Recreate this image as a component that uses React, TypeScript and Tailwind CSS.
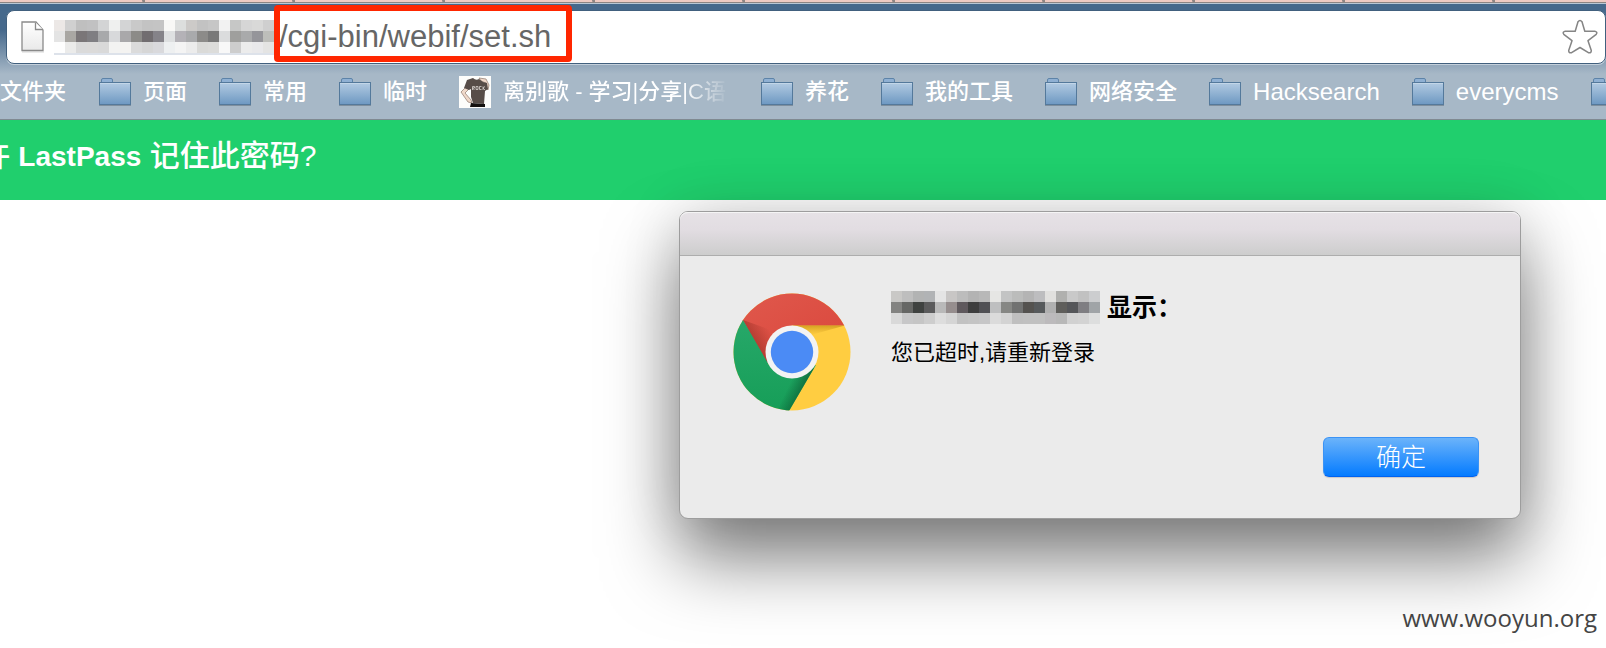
import type { ReactNode } from "react";

const urlMosaic = [
  ["#ece8e6", "#d0d0d0", "#bfbfbf", "#c1c1c2", "#d3d4d5", "#eff0ef", "#d3d4d5", "#c9c9c9", "#c3c3c3", "#c4c4c4", "#f8f8f6", "#dcdedd", "#cccac8", "#c2c2c2", "#c6c6c6", "#f2f2f2", "#c6c7c6", "#d6d6d6", "#d9d9d8", "#cfcfcf"],
  ["#e4e4e4", "#a9a7a3", "#7a7678", "#7f7e82", "#a8a9ab", "#d8d9db", "#a9a8aa", "#8c8b88", "#716d70", "#858389", "#dee0e1", "#b4b2b7", "#a9aaac", "#8c8b89", "#797979", "#dbdcdd", "#9f9f9d", "#a9aaab", "#95959a", "#bdbeba"],
  ["#fefefe", "#ebebea", "#dadada", "#dbdad9", "#d9d9d9", "#f3f3f2", "#f4f3f1", "#dbdbdb", "#d6d6d6", "#d9d9dc", "#eef0f1", "#f4f4f4", "#ececec", "#dadad8", "#dcdcda", "#f8f8f8", "#cdcdcd", "#ececec", "#e9e9eb", "#e4e4e3"],
];

const hostMosaic = [
  ["#c9c8c6", "#bebebe", "#b2b3b3", "#b1b3b5", "#e4e4e4", "#c8c6c5", "#bcbcbc", "#b3b3b3", "#b8b8b8", "#e6e6e4", "#c3c4c4", "#bbbcbb", "#b4b4b4", "#bdbdbf", "#e1e0de", "#b0b0ae", "#c9c9c9", "#c1c1c1", "#cccdcf"],
  ["#838381", "#666765", "#3f4240", "#5b5b5c", "#b9b9b9", "#968e8e", "#5f595d", "#3e3e3e", "#505054", "#bebfc0", "#868784", "#717271", "#54524f", "#56595b", "#b0b0b0", "#5f5e5b", "#555659", "#7f7e82", "#a0a4a7"],
  ["#d9d9d9", "#c7c7c8", "#c5c5c5", "#cdcdcd", "#dddddd", "#d5d5d5", "#c2c2c2", "#c4c4c4", "#c6c6c7", "#dbdbdb", "#d3d3d3", "#bfbfbf", "#c0c0c0", "#c0c0c0", "#bcbabc", "#b8b8b8", "#d1d1d1", "#d3d3d3", "#dddede"],
];

function Mosaic({ rows }: { rows: string[][] }) {
  return (
    <div aria-hidden="true" className="flex shrink-0 flex-col">
      {rows.map((row, r) => (
        <div key={r} className="flex">
          {row.map((color, c) => (
            <span key={c} className="size-[11px]" style={{ backgroundColor: color }} />
          ))}
        </div>
      ))}
    </div>
  );
}

function FolderIcon() {
  return (
    <svg width="32" height="28" viewBox="0 0 32 28" className="shrink-0" aria-hidden="true">
      <defs>
        <linearGradient id="folder" x1="0" y1="0" x2="0" y2="1">
          <stop offset="0" stopColor="#b3cbe2" />
          <stop offset="1" stopColor="#6d98c2" />
        </linearGradient>
      </defs>
      <path d="M2.500 5V2Q2.500.5 4 .5H12Q13.500.5 13.500 2V5" fill="#8fb0d3" stroke="#5d83a8" />
      <rect x=".5" y="4.500" width="31" height="22" fill="url(#folder)" stroke="#54799b" />
      <path d="M1 5.500H31" stroke="#c3d6e8" />
      <path d="M0 27.500H32" stroke="#7f8f9e" />
    </svg>
  );
}

function ShirtIcon() {
  return (
    <svg width="32" height="32" viewBox="0 0 32 32" className="shrink-0" aria-hidden="true">
      <rect width="32" height="32" fill="#fdfdfb" />
      <path d="M7 11L2 16L9 26L13 27L12 24L6 17L10 13Z" fill="#f0d9ca" stroke="#8d776b" strokeWidth=".7" />
      <path d="M20 2L27 3L30 9L29 14L26 11L27 7L22 5Z" fill="#f0d9ca" stroke="#8d776b" strokeWidth=".7" />
      <path d="M14 2L8 4L5 12L10 14L12 13L12 21L14 27L25 28L26 15L29 13L28 7L24 6L20 3Q17 5 14 2Z" fill="#574d48" />
      <path d="M12 27L26 28L26 31H11Z" fill="#14110f" />
      <path d="M13.500 14V10.500H15.500V12H13.500L15.500 14M17 10.500H19V13.500H17ZM22.500 10.500H20.500V13.500H22.500M24 10.500V14M26 10.500L24 12L26 14" fill="none" stroke="#d8d3cf" strokeWidth=".8" />
    </svg>
  );
}

function PageIcon() {
  return (
    <svg width="24" height="32" viewBox="0 0 24 32" className="shrink-0" aria-hidden="true">
      <defs>
        <linearGradient id="sheet" x1="0" y1="0" x2="0" y2="1">
          <stop offset="0" stopColor="#ffffff" />
          <stop offset="1" stopColor="#e9e9e9" />
        </linearGradient>
      </defs>
      <path d="M1 31H23" stroke="#d5d5d5" />
      <path d="M1 1H15L22 9V29.500H1Z" fill="url(#sheet)" stroke="#8a8a8a" strokeWidth="1.300" />
      <path d="M14.500 1.500V8.500H22" fill="#fff" stroke="#8a8a8a" strokeWidth="1.300" />
    </svg>
  );
}

function StarIcon() {
  return (
    <svg width="36" height="36" viewBox="0 0 36 36" className="shrink-0" aria-hidden="true">
      <path
        d="M16 2.800Q18 .2 20 2.800L22.800 12.200H32.800Q36 13 34.200 15.300L26 21.700L29.300 31.600Q29.200 34.400 26.400 33.700L18 28.500L9.600 33.700Q6.800 34.400 6.700 31.600L10 21.700L1.800 15.300Q0 13 3.200 12.200H13.200Z"
        fill="#fff"
        stroke="#858585"
        strokeWidth="1.500"
        strokeLinejoin="round"
      />
    </svg>
  );
}

function ChromeLogo() {
  return (
    <svg viewBox="0 0 118 118" className="size-[118px] shrink-0" role="img" aria-label="Chrome">
      <defs>
        <clipPath id="disc">
          <circle cx="59" cy="59" r="58.500" />
        </clipPath>
        <linearGradient id="red" x1="0" y1="0" x2="1" y2="1">
          <stop offset="0" stopColor="#e0594d" />
          <stop offset="1" stopColor="#d9453a" />
        </linearGradient>
        <linearGradient id="green" x1="0" y1="0" x2="0" y2="1">
          <stop offset="0" stopColor="#27a869" />
          <stop offset="1" stopColor="#169e58" />
        </linearGradient>
        <linearGradient id="redShade" gradientUnits="userSpaceOnUse" x1="20" y1="50" x2="38" y2="40">
          <stop offset="0" stopColor="#8e2a20" stopOpacity=".55" />
          <stop offset="1" stopColor="#8e2a20" stopOpacity="0" />
        </linearGradient>
        <linearGradient id="yellowShade" gradientUnits="userSpaceOnUse" x1="80" y1="32" x2="80" y2="43">
          <stop offset="0" stopColor="#b8860b" stopOpacity=".65" />
          <stop offset="1" stopColor="#e0a92c" stopOpacity="0" />
        </linearGradient>
        <linearGradient id="greenShade" gradientUnits="userSpaceOnUse" x1="71" y1="97" x2="57" y2="90">
          <stop offset="0" stopColor="#0b5c33" stopOpacity=".75" />
          <stop offset="1" stopColor="#0b5c33" stopOpacity="0" />
        </linearGradient>
      </defs>
      <g clipPath="url(#disc)">
        <rect width="118" height="118" fill="#ffcd41" />
        <path d="M0 0H118V32.500H59L34 72L8 26Z" fill="url(#red)" />
        <path d="M10 27L34 72L52 42Z" fill="url(#redShade)" />
        <path d="M59 32.500H112L78 42Z" fill="url(#yellowShade)" />
        <path d="M10 27L0 27V118H56L83 72L59 80L36 72Z" fill="url(#green)" />
        <path d="M81 75L56 118H44L60 82Z" fill="url(#greenShade)" />
      </g>
      <circle cx="59" cy="59" r="26.500" fill="#f3f3f3" />
      <circle cx="59" cy="59" r="21.200" fill="#4b8bf5" />
    </svg>
  );
}

function Bookmark({ label, latin, icon }: { label?: string; latin?: boolean; icon?: ReactNode }) {
  return (
    <a href="#" className="flex shrink-0 items-center gap-3">
      {icon ?? <FolderIcon />}
      {label && <span className={latin ? "h-8 text-[24px] leading-8" : "h-8 leading-8"}>{label}</span>}
    </a>
  );
}

export default function App() {
  return (
    <div className="flex min-h-screen flex-col overflow-hidden bg-white font-['Liberation_Sans','Noto_Sans_CJK_SC',sans-serif]">
      <header className="border-b border-[#808991] bg-[linear-gradient(#46698c_0px,#46698c_30px,#a7b8c7_74px)]">
        <div className="flex h-[4px] justify-start gap-[147px] overflow-hidden border-b border-[#b9c8d6] bg-[#efcbc3] pl-[142px] shadow-[inset_0_-1px_0_#8d8583]">
          {Array.from({ length: 10 }, (_, i) => (
            <span key={i} className="h-[3px] w-[3px] shrink-0 rounded-bl-full bg-[#8d8583]" />
          ))}
        </div>
        <div className="pt-[6px] pl-[6px]">
          <div className="flex h-[54px] items-center rounded-lg border border-[#41607e] bg-white pr-[7px] pl-[14px] shadow-[0_1px_0_#c4d0db]">
            <PageIcon />
            <div className="ml-[9px] border-b-2 border-[#dde2ea]">
              <Mosaic rows={urlMosaic} />
            </div>
            <div className="relative flex-1">
              <input
                aria-label="地址"
                defaultValue="/cgi-bin/webif/set.sh"
                className="h-10 w-full pl-[5px] text-[31px] text-[#666] outline-none"
              />
              <div className="pointer-events-none absolute -top-3 left-0 h-[57px] w-[298px] rounded-[4px] border-[6px] border-[#ff2600]" />
            </div>
            <button type="button" aria-label="收藏">
              <StarIcon />
            </button>
          </div>
        </div>
        <nav aria-label="书签" className="flex h-[55px] items-center gap-8 overflow-hidden text-[22px] font-medium text-white">
          <a href="#" className="h-8 w-[67px] shrink-0 leading-8">文件夹</a>
          <Bookmark label="页面" />
          <Bookmark label="常用" />
          <Bookmark label="临时" />
          <a href="#" className="flex w-[270px] shrink-0 items-center gap-3">
            <ShirtIcon />
            <span className="h-8 flex-1 overflow-hidden bg-[linear-gradient(90deg,#fff_80%,transparent)] bg-clip-text leading-8 whitespace-nowrap text-transparent">
              离别歌 - 学习|分享|C语
            </span>
          </a>
          <Bookmark label="养花" />
          <Bookmark label="我的工具" />
          <Bookmark label="网络安全" />
          <Bookmark label="Hacksearch" latin />
          <Bookmark label="everycms" latin />
          <Bookmark />
        </nav>
      </header>

      <div className="h-20 overflow-hidden bg-[#20cf6d] pt-4 text-[30px] leading-10 font-medium text-white">
        <p className="-ml-5 whitespace-nowrap">
          许 <span className="text-[28px] font-bold">LastPass</span> 记住此密码?
        </p>
      </div>

      <main className="relative flex flex-1 flex-col items-end">
        <section
          role="dialog"
          aria-labelledby="dialog-title"
          className="mt-[11px] mr-[85px] w-[842px] rounded-[9px] border border-[#9d9d9d] bg-[#ebebeb] shadow-[0_40px_72px_rgba(0,0,0,0.5),0_0_60px_rgba(0,0,0,0.12)]"
        >
          <div className="h-11 rounded-t-lg border-b border-[#adadad] bg-[linear-gradient(#e6e2e6,#e2dde2_40%,#cdcdcd)] shadow-[inset_0_1px_0_#f5f5f5]" />
          <div className="flex pt-[37px] pl-[53px]">
            <ChromeLogo />
            <div className="ml-10 flex flex-col">
              <h1 id="dialog-title" className="-mt-[5px] flex items-center gap-[7px] text-[25px] leading-[38px] font-bold text-black">
                <Mosaic rows={hostMosaic} />
                显示：
              </h1>
              <p className="mt-[11px] text-[22px] leading-8 text-black">您已超时,请重新登录</p>
            </div>
          </div>
          <div className="flex justify-end pt-[26px] pr-[41px] pb-[41px]">
            <button
              type="button"
              className="h-10 w-[156px] rounded-md border border-[#3b93f5] border-b-[#0062f0] bg-[linear-gradient(#6bb3fa,#047bff)] text-[25px] leading-9 font-light text-white shadow-[0_1px_1px_rgba(0,0,0,0.15)]"
            >
              确定
            </button>
          </div>
        </section>
        <footer className="absolute right-[9px] bottom-3 font-['Open_Sans',sans-serif] text-[24px] leading-9 text-[#444]">
          www.wooyun.org
        </footer>
      </main>
    </div>
  );
}
